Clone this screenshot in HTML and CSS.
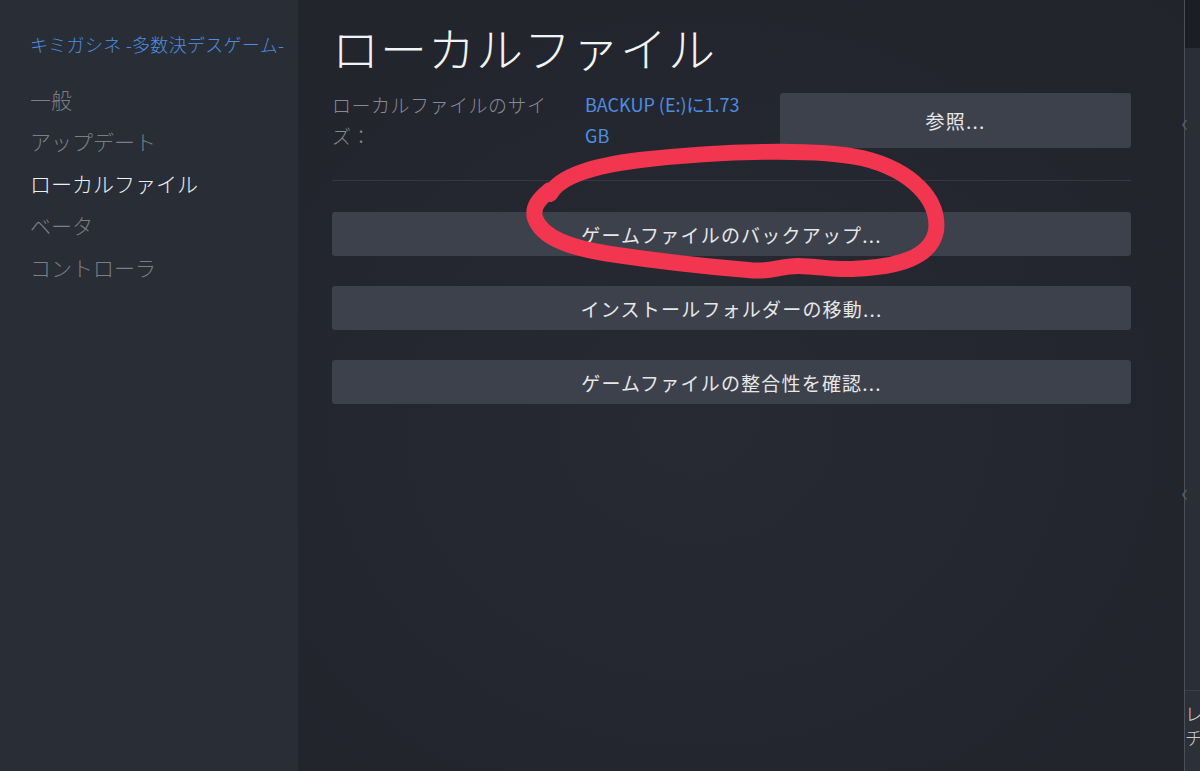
FILE: index.html
```html
<!DOCTYPE html>
<html>
  <head>
    <meta charset="utf-8">
    <link rel="stylesheet" href="styles.css">
  </head>
  <body>
    <div class="window">
      <div class="sidebar">
        <div class="game-title">キミガシネ -多数決デスゲーム-</div>
        <div class="nav">
          <div class="nav-item">一般</div>
          <div class="nav-item">アップデート</div>
          <div class="nav-item active">ローカルファイル</div>
          <div class="nav-item">ベータ</div>
          <div class="nav-item">コントローラ</div>
        </div>
      </div>

      <div class="content">
        <h1 class="page-title">ローカルファイル</h1>

        <div class="size-row">
          <div class="size-label">ローカルファイルのサイズ：</div>
          <div class="size-value">BACKUP (E:)に1.73 GB</div>
          <button class="btn btn-browse">参照...</button>
        </div>

        <div class="divider"></div>

        <div class="actions">
          <button class="btn btn-wide">ゲームファイルのバックアップ...</button>
          <button class="btn btn-wide">インストールフォルダーの移動...</button>
          <button class="btn btn-wide">ゲームファイルの整合性を確認...</button>
        </div>
      </div>

      <div class="edge">
        <div class="edge-top"></div>
        <div class="edge-body">
          <span class="edge-chev">‹</span>
          <span class="edge-chev low">‹</span>
        </div>
        <div class="edge-foot">レン<br>チ</div>
      </div>

      <svg class="scribble" width="1200" height="771" viewBox="0 0 1200 771">
        <path d="M 550 194
                 C 560 176, 592 166, 640 160
                 C 720 151, 815 148, 862 158
                 C 912 170, 940 200, 936 231
                 C 931 257, 900 267, 852 269
                 C 832 270, 818 266, 798 266
                 C 778 266, 772 273, 748 270
                 C 700 266, 650 260, 610 254
                 C 570 248, 542 238, 535 218
                 C 532 207, 539 199, 550 190" />
      </svg>
    </div>
  </body>
</html>
```

FILE: styles.css
```css
body {
    margin: 0;
    background: #23262e;
    font-family: "Noto Sans CJK JP", "Noto Sans", sans-serif;
    font-weight: 300;
}

.window {
    position: relative;
    display: flex;
    width: 1200px;
    height: 771px;
    overflow: hidden;
}

/* left navigation */

.sidebar {
    width: 298px;
    flex-shrink: 0;
    background: #292d36;
    padding: 30px 0 0 30px;
    box-sizing: border-box;
}

.game-title {
    color: #4d8ee0;
    font-size: 18px;
    line-height: 28px;
    letter-spacing: 0.3px;
    white-space: nowrap;
}

.nav {
    margin-top: 20px;
    display: flex;
    flex-direction: column;
}

.nav-item {
    color: #7b7e85;
    font-size: 21px;
    line-height: 42px;
    height: 42px;
}

.nav-item.active {
    color: #eef0f2;
}

/* main panel */

.content {
    flex: 1;
    padding: 0 53px 0 34px;
    background: radial-gradient(ellipse at 45% 55%, #272a33 0%, #23262e 60%, #21242b 100%);
}

.page-title {
    margin: 17px 0 0 0;
    color: #f2f3f4;
    font-size: 47px;
    font-weight: 300;
    line-height: 60px;
    letter-spacing: 1px;
}

.size-row {
    display: flex;
    align-items: flex-start;
    margin-top: 16px;
}

.size-label {
    width: 228px;
    margin-right: 25px;
    color: #878a91;
    font-size: 19px;
    line-height: 31px;
    letter-spacing: 0.5px;
    margin-top: -4px;
}

.size-value {
    width: 176px;
    margin-right: 19px;
    color: #4d8ee0;
    font-size: 18px;
    font-weight: 400;
    line-height: 31px;
    margin-top: -4px;
}

.btn {
    display: block;
    border: none;
    border-radius: 3px;
    background: #3d414b;
    color: #e6e7e9;
    font-family: inherit;
    font-weight: 400;
    font-size: 19px;
    letter-spacing: 1.2px;
    padding: 0;
}

.btn-browse {
    width: 351px;
    height: 55px;
}

.divider {
    height: 1px;
    background: #343841;
    margin-top: 29px;
}

.actions {
    display: flex;
    flex-direction: column;
    gap: 30px;
    margin-top: 31px;
}

.btn-wide {
    width: 100%;
    height: 44px;
}

/* clipped neighbour window on the right */

.edge {
    width: 15px;
    flex-shrink: 0;
    border-left: 1px solid #4c5058;
    display: flex;
    flex-direction: column;
}

.edge-top {
    height: 48px;
    background: #1b1e25;
}

.edge-body {
    flex: 1;
    background: #2a2e37;
    position: relative;
}

.edge-chev {
    position: absolute;
    left: -4px;
    top: 60px;
    color: #5a5e66;
    font-size: 26px;
    line-height: 1;
}

.edge-chev.low {
    top: 430px;
}

.edge-foot {
    height: 70px;
    border-top: 1px solid #3b3f47;
    background: #2c3039;
    color: #c9cbce;
    font-size: 18px;
    line-height: 24px;
    padding-top: 10px;
    overflow: hidden;
    white-space: nowrap;
}

/* hand drawn marker circle */

.scribble {
    position: absolute;
    left: 0;
    top: 0;
    pointer-events: none;
}

.scribble path {
    fill: none;
    stroke: #f2364f;
    stroke-width: 16;
    stroke-linecap: round;
    stroke-linejoin: round;
}
```
